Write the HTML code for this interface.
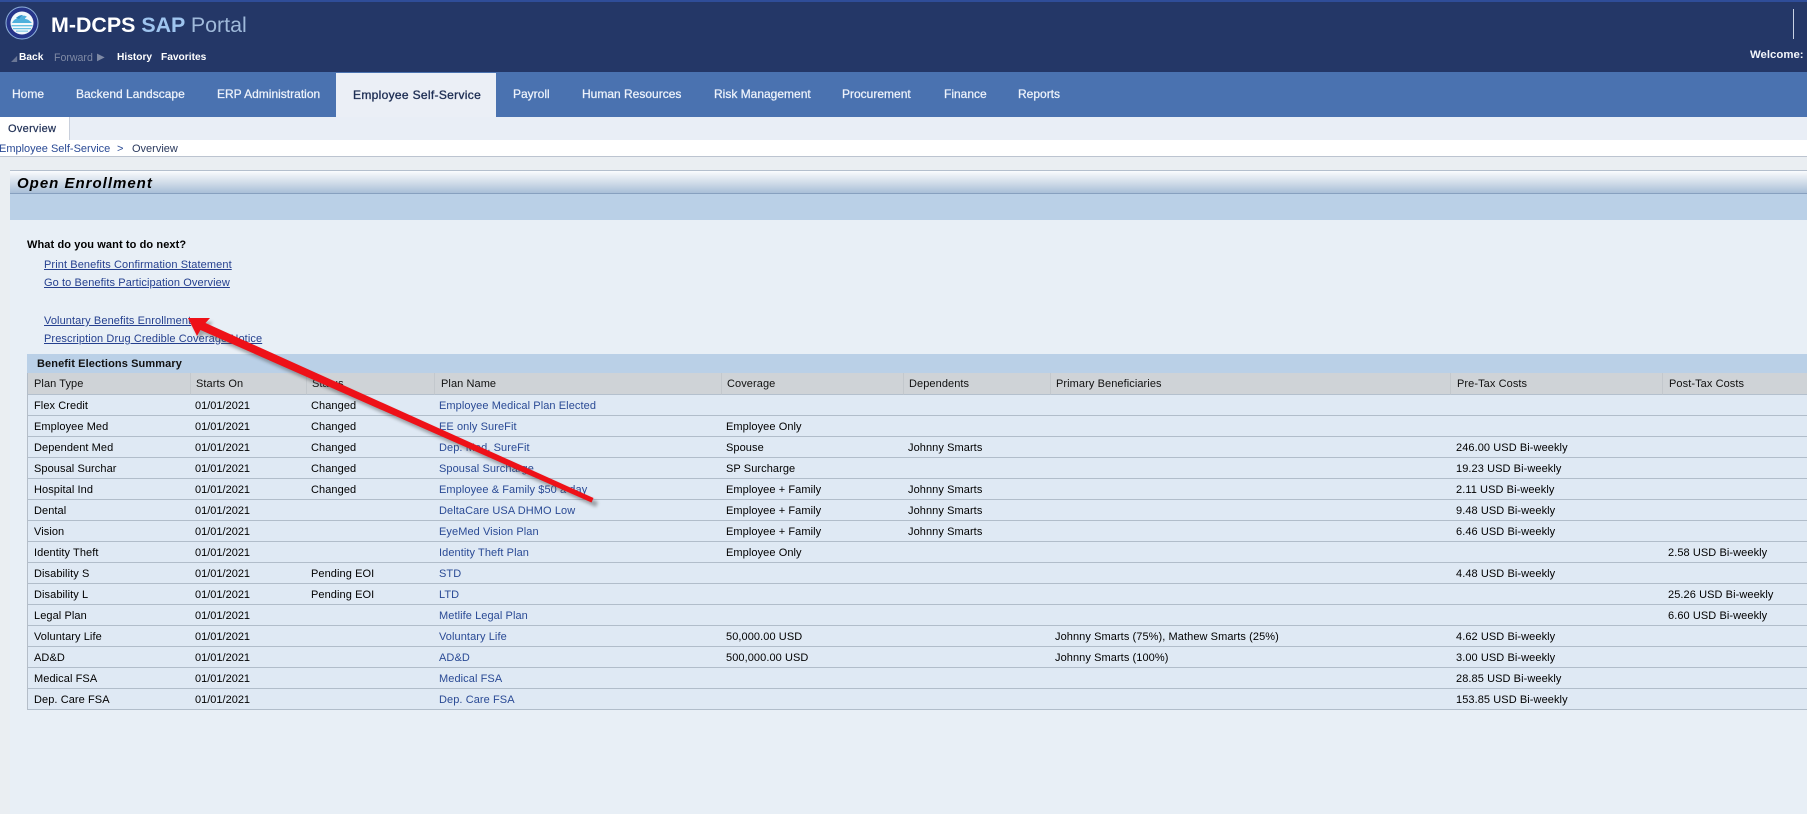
<!DOCTYPE html>
<html lang="en">
<head>
<meta charset="utf-8">
<title>M-DCPS SAP Portal</title>
<style>
html,body{margin:0;padding:0;width:1807px;height:814px;overflow:hidden;background:#e8eff6;font-family:"Liberation Sans",Arial,sans-serif;font-size:11px;color:#000}
.a{position:absolute;white-space:nowrap;line-height:16px}
.bar{position:absolute;left:0;width:1807px}
a{color:#2a4a95;text-decoration:none}
.nav{position:absolute;top:86px;line-height:16px;font-size:12px;color:#eef3fb;white-space:nowrap;-webkit-text-stroke:.25px #eef3fb}
.u{text-decoration:underline;color:#25408f;letter-spacing:.1px}
table{position:absolute;left:27px;top:373px;width:1780px;table-layout:fixed;border-collapse:separate;border-spacing:0;border-left:1px solid #b4bdc8;font-size:11px}
th{height:22px;box-sizing:border-box;background:#cfd3d7;font-weight:normal;text-align:left;border-bottom:1px solid #b4c0cd;border-left:1px solid #c3c8cd;color:#111;white-space:nowrap;padding:0;letter-spacing:.08px}
th:first-child{border-left:0}
td{height:21px;box-sizing:border-box;background:#dfe9f4;border-bottom:1px solid #b1bdca;white-space:nowrap;padding:1px 0 0 0;color:#000;line-height:14px;letter-spacing:.08px}
td:nth-child(2){letter-spacing:0}
th:nth-child(1),td:nth-child(1){padding-left:6px}
th:nth-child(2){padding-left:5px}td:nth-child(2){padding-left:5px}
th:nth-child(3){padding-left:5px}td:nth-child(3){padding-left:5px}
th:nth-child(4){padding-left:6px}td:nth-child(4){padding-left:5px}
th:nth-child(5){padding-left:5px}td:nth-child(5){padding-left:5px}
th:nth-child(6){padding-left:5px}td:nth-child(6){padding-left:5px}
th:nth-child(7){padding-left:5px}td:nth-child(7){padding-left:5px}
th:nth-child(8){padding-left:6px}td:nth-child(8){padding-left:6px}
th:nth-child(9){padding-left:6px}td:nth-child(9){padding-left:6px}
</style>
</head>
<body>
<!-- header -->
<div class="bar" style="top:0;height:72px;background:#243767"></div>
<div class="bar" style="top:0;height:2px;background:#2f4d99"></div>
<svg style="position:absolute;left:5px;top:6px" width="34" height="34" viewBox="0 0 34 34">
<circle cx="17" cy="17" r="16" fill="#26358a" stroke="#8fb2dc" stroke-width="1"/>
<circle cx="17" cy="17" r="11.5" fill="#f2f8fb"/>
<path d="M7 17c2-4 5-5 8-5 2-3 5-3 7-1-1 0-2 1-2 2 3 0 5 2 7 4z" fill="#4eb0dc"/>
<path d="M6.5 19h21v1.4h-21zM8 22h18v1.2H8zM11 24.6h12v1H11z" fill="#69c0e2"/>
<path d="M11 12c2-2 4-3 7-3l-4 4z" fill="#2f8fc8"/>
</svg>
<div class="a" style="left:51px;top:13px;font-size:21.4px;line-height:24px;font-weight:bold;color:#fff">M-DCPS <span style="color:#9fc5ef">SAP</span> <span style="font-weight:normal;color:#9fb9da">Portal</span></div>
<div class="a" style="left:11px;top:53px;color:#6a7695;font-size:8px;line-height:12px">&#9698;</div>
<div class="a" style="left:19px;top:50px;font-size:10.2px;font-weight:bold;color:#fff">Back</div>
<div class="a" style="left:54px;top:50px;font-size:10.6px;color:#7f8aa5">Forward</div>
<div class="a" style="left:97px;top:50px;color:#7f8aa5;font-size:10px">&#9654;</div>
<div class="a" style="left:117px;top:50px;font-size:10.2px;font-weight:bold;color:#fff">History</div>
<div class="a" style="left:161px;top:50px;font-size:10.2px;font-weight:bold;color:#fff">Favorites</div>
<div style="position:absolute;left:1793px;top:9px;width:1px;height:30px;background:#c8d2e4"></div>
<div class="a" style="left:1750px;top:47px;font-size:11.4px;font-weight:bold;color:#f2f5fa">Welcome:</div>

<!-- nav -->
<div class="bar" style="top:72px;height:45px;background:#4a72b0"></div>
<div style="position:absolute;left:336px;top:73px;width:160px;height:44px;background:#ebeff6"></div>
<div class="nav" style="left:12px">Home</div>
<div class="nav" style="left:76px">Backend Landscape</div>
<div class="nav" style="left:217px">ERP Administration</div>
<div class="nav" style="left:353px;top:87px;color:#1f2f55;-webkit-text-stroke:.35px #1f2f55;letter-spacing:.32px">Employee Self-Service</div>
<div class="nav" style="left:513px">Payroll</div>
<div class="nav" style="left:582px">Human Resources</div>
<div class="nav" style="left:714px">Risk Management</div>
<div class="nav" style="left:842px">Procurement</div>
<div class="nav" style="left:944px">Finance</div>
<div class="nav" style="left:1018px">Reports</div>

<!-- sub nav -->
<div class="bar" style="top:117px;height:23px;background:#e9eef6"></div>
<div style="position:absolute;left:0;top:117px;width:69px;height:23px;background:#fff;border-right:1px solid #c9d0dc"></div>
<div class="a" style="left:8px;top:121px;color:#1f2f55;-webkit-text-stroke:.2px #1f2f55;letter-spacing:.3px">Overview</div>

<!-- breadcrumb -->
<div class="bar" style="top:140px;height:16px;background:#fff"></div>
<div class="bar" style="top:156px;height:1px;background:#bcc4d0"></div>
<div class="a" style="left:-1px;top:141px;color:#2a4a95">Employee Self-Service</div>
<div class="a" style="left:117px;top:141px;color:#2a4a95">&gt;</div>
<div class="a" style="left:132px;top:141px;color:#2b3a5e">Overview</div>

<!-- page area -->
<div class="bar" style="top:157px;height:657px;background:#eaeef2"></div>
<div style="position:absolute;left:10px;top:220px;width:1797px;height:594px;background:#e8eff6"></div>
<div style="position:absolute;left:10px;top:170px;width:1797px;height:1px;background:#b4bfcd"></div>
<div style="position:absolute;left:10px;top:171px;width:1797px;height:22px;background:linear-gradient(#fbfcfe 0%,#eef2f7 15%,#d3deea 50%,#a9bfd8 100%)"></div>
<div style="position:absolute;left:10px;top:193px;width:1797px;height:1px;background:#87a0bf"></div>
<div style="position:absolute;left:10px;top:194px;width:1797px;height:26px;background:#bad0e7"></div>
<div class="a" style="left:17px;top:174px;font-size:15px;line-height:20px;font-weight:bold;font-style:italic;letter-spacing:1px;color:#000">Open Enrollment</div>

<div class="a" style="left:27px;top:237px;font-weight:bold;letter-spacing:.1px">What do you want to do next?</div>
<div class="a" style="left:44px;top:257px"><a class="u">Print Benefits Confirmation Statement</a></div>
<div class="a" style="left:44px;top:275px"><a class="u">Go to Benefits Participation Overview</a></div>
<div class="a" style="left:44px;top:313px"><a class="u">Voluntary Benefits Enrollment</a></div>
<div class="a" style="left:44px;top:331px"><a class="u">Prescription Drug Credible Coverage Notice</a></div>

<!-- table -->
<div style="position:absolute;left:27px;top:354px;width:1780px;height:19px;background:#bad0e7"></div>
<div class="a" style="left:37px;top:356px;font-weight:bold;color:#111;letter-spacing:.1px">Benefit Elections Summary</div>
<table>
<colgroup><col style="width:162px"><col style="width:116px"><col style="width:128px"><col style="width:287px"><col style="width:182px"><col style="width:147px"><col style="width:400px"><col style="width:212px"><col style="width:146px"></colgroup>
<tr><th>Plan Type</th><th>Starts On</th><th>Status</th><th>Plan Name</th><th>Coverage</th><th>Dependents</th><th>Primary Beneficiaries</th><th>Pre-Tax Costs</th><th>Post-Tax Costs</th></tr>
<tr><td>Flex Credit</td><td>01/01/2021</td><td>Changed</td><td><a>Employee Medical Plan Elected</a></td><td></td><td></td><td></td><td></td><td></td></tr>
<tr><td>Employee Med</td><td>01/01/2021</td><td>Changed</td><td><a>EE only SureFit</a></td><td>Employee Only</td><td></td><td></td><td></td><td></td></tr>
<tr><td>Dependent Med</td><td>01/01/2021</td><td>Changed</td><td><a>Dep. Med. SureFit</a></td><td>Spouse</td><td>Johnny Smarts</td><td></td><td>246.00 USD Bi-weekly</td><td></td></tr>
<tr><td>Spousal Surchar</td><td>01/01/2021</td><td>Changed</td><td><a>Spousal Surcharge</a></td><td>SP Surcharge</td><td></td><td></td><td>19.23 USD Bi-weekly</td><td></td></tr>
<tr><td>Hospital Ind</td><td>01/01/2021</td><td>Changed</td><td><a>Employee &amp; Family $50 a day</a></td><td>Employee + Family</td><td>Johnny Smarts</td><td></td><td>2.11 USD Bi-weekly</td><td></td></tr>
<tr><td>Dental</td><td>01/01/2021</td><td></td><td><a>DeltaCare USA DHMO Low</a></td><td>Employee + Family</td><td>Johnny Smarts</td><td></td><td>9.48 USD Bi-weekly</td><td></td></tr>
<tr><td>Vision</td><td>01/01/2021</td><td></td><td><a>EyeMed Vision Plan</a></td><td>Employee + Family</td><td>Johnny Smarts</td><td></td><td>6.46 USD Bi-weekly</td><td></td></tr>
<tr><td>Identity Theft</td><td>01/01/2021</td><td></td><td><a>Identity Theft Plan</a></td><td>Employee Only</td><td></td><td></td><td></td><td>2.58 USD Bi-weekly</td></tr>
<tr><td>Disability S</td><td>01/01/2021</td><td>Pending EOI</td><td><a>STD</a></td><td></td><td></td><td></td><td>4.48 USD Bi-weekly</td><td></td></tr>
<tr><td>Disability L</td><td>01/01/2021</td><td>Pending EOI</td><td><a>LTD</a></td><td></td><td></td><td></td><td></td><td>25.26 USD Bi-weekly</td></tr>
<tr><td>Legal Plan</td><td>01/01/2021</td><td></td><td><a>Metlife Legal Plan</a></td><td></td><td></td><td></td><td></td><td>6.60 USD Bi-weekly</td></tr>
<tr><td>Voluntary Life</td><td>01/01/2021</td><td></td><td><a>Voluntary Life</a></td><td>50,000.00 USD</td><td></td><td>Johnny Smarts (75%), Mathew Smarts (25%)</td><td>4.62 USD Bi-weekly</td><td></td></tr>
<tr><td>AD&amp;D</td><td>01/01/2021</td><td></td><td><a>AD&amp;D</a></td><td>500,000.00 USD</td><td></td><td>Johnny Smarts (100%)</td><td>3.00 USD Bi-weekly</td><td></td></tr>
<tr><td>Medical FSA</td><td>01/01/2021</td><td></td><td><a>Medical FSA</a></td><td></td><td></td><td></td><td>28.85 USD Bi-weekly</td><td></td></tr>
<tr><td>Dep. Care FSA</td><td>01/01/2021</td><td></td><td><a>Dep. Care FSA</a></td><td></td><td></td><td></td><td>153.85 USD Bi-weekly</td><td></td></tr>
</table>

<!-- arrow -->
<svg style="position:absolute;left:0;top:0;pointer-events:none" width="1807" height="814" viewBox="0 0 1807 814">
<defs><filter id="s" x="-10%" y="-10%" width="130%" height="130%"><feGaussianBlur stdDeviation="1.6"/></filter></defs>
<path d="M188 318L210 318L205.5 323L595 498L593 503L200.5 330L197 336Z" transform="translate(3 4)" fill="#4a4a4a" opacity=".45" filter="url(#s)"/>
<path d="M188 318L210 318L205.5 323L593.5 498L591.5 502.5L200.5 330L197 336Z" fill="#ee1118"/>
</svg>
</body>
</html>
